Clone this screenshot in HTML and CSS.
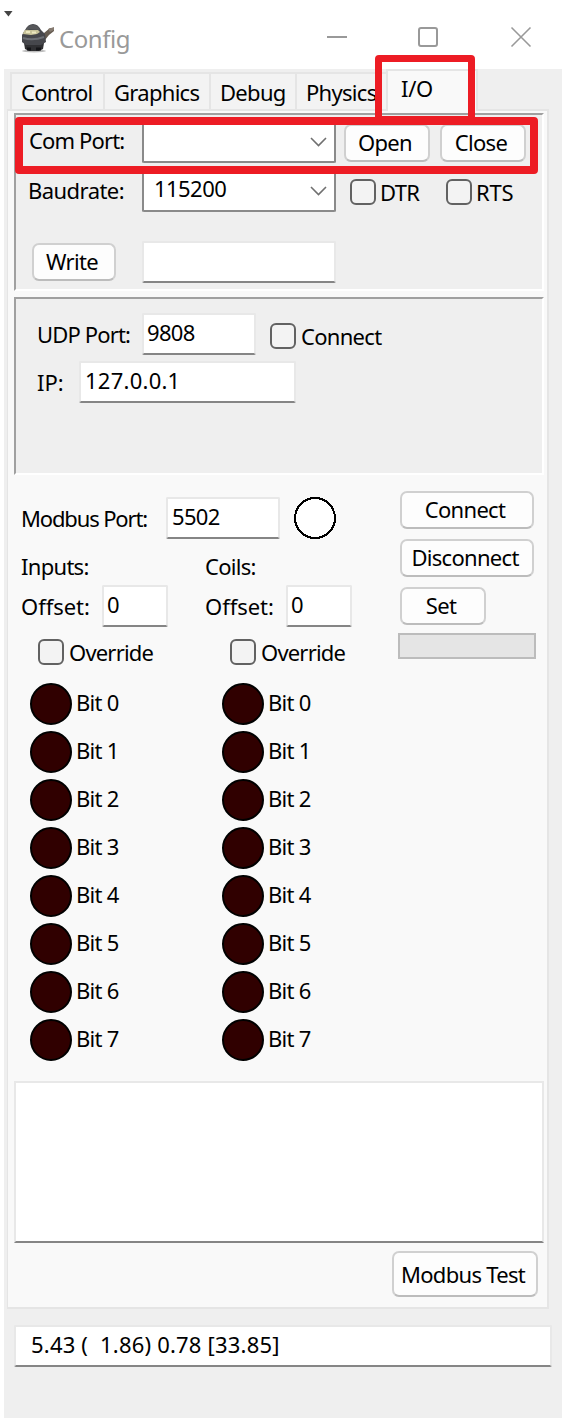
FILE: index.html
```html
<!DOCTYPE html>
<html lang="en">
<head>
<meta charset="utf-8">
<title>Config</title>
<link rel="stylesheet" href="styles.css">
</head>
<body>
<div class="window">
  <header class="titlebar">
    <svg class="menu-arrow" width="9" height="6" viewBox="0 0 9 6"><path d="M0 0h8.500L4.500 5.500z" fill="#444"/></svg>
    <svg class="app-icon" width="34" height="32" viewBox="0 0 34 32">
      <ellipse cx="12" cy="28" rx="12" ry="1.500" fill="#bdbdbd"/>
      <path d="M18 11l4-1 6-5 4 1v2l-5 4-4 5z" fill="#655b50"/>
      <path d="M26 6l6-2v3l-4 2z" fill="#857a70"/>
      <path d="M2 20l1 6 4 2h10l4-2 1-6z" fill="#303033"/>
      <path d="M0 12l3-5Q6 1 11 1t8 6l4 4 1 8-5 3H4l-4-3z" fill="#46474c"/>
      <path d="M4 6q2-4 7-4t7 5z" fill="#56575a"/>
      <path d="M2 8q2-2 5-1h9l2 2-3 2-6 1-8-1z" fill="#c8c39a"/>
      <path d="M4 9h4M10 9.500h4" stroke="#ece8c0" stroke-width="2"/>
      <path d="M1 15q10 3 21-1" stroke="#6d7076" stroke-width="2" fill="none"/>
      <path d="M5 26h4M14 26h5" stroke="#151518" stroke-width="3"/>
    </svg>
    <span class="title">Config</span>
    <svg class="controls" width="206" height="24" viewBox="0 0 206 24" fill="none" stroke="#999" stroke-width="2">
      <path d="M0 13h20"/><rect x="92" y="4" width="18" height="18" rx="2"/><path d="M184.500 3.500l19 19M203.500 3.500l-19 19" stroke-width="1.600"/>
    </svg>
  </header>

  <nav class="tabs">
    <span class="tab t-control">Control</span><span class="tab t-graphics">Graphics</span><span class="tab t-debug">Debug</span><span class="tab t-physics">Physics</span><span class="tab active">I/O</span>
  </nav>

  <main class="page">
    <section class="panel serial">
      <div class="row com">
        <span class="label com-label">Com Port:</span>
        <span class="select"><svg width="17" height="10" viewBox="0 0 17 10"><path d="M1 1l7.500 7.500L16 1" fill="none" stroke="#707070" stroke-width="1.600"/></svg></span>
        <button class="btn open">Open</button>
        <button class="btn close">Close</button>
      </div>
      <div class="row baud">
        <span class="label baud-label">Baudrate:</span>
        <span class="select"><span class="value">115200</span><svg width="17" height="10" viewBox="0 0 17 10"><path d="M1 1l7.500 7.500L16 1" fill="none" stroke="#707070" stroke-width="1.600"/></svg></span>
        <i class="box dtr"></i><span class="label dtr-label">DTR</span>
        <i class="box rts"></i><span class="label rts-label">RTS</span>
      </div>
      <div class="row write-row">
        <button class="btn write">Write</button>
        <span class="field write-field"></span>
      </div>
    </section>

    <section class="panel network">
      <div class="row udp">
        <span class="label udp-label">UDP Port:</span>
        <span class="field udp-field">9808</span>
        <i class="box"></i><span class="label connect-label">Connect</span>
      </div>
      <div class="row ip">
        <span class="label ip-label">IP:</span>
        <span class="field ip-field">127.0.0.1</span>
      </div>
    </section>

    <section class="modbus">
      <div class="registers">
        <div class="row port">
          <span class="label port-label">Modbus Port:</span>
          <span class="field port-field">5502</span>
          <svg class="led" width="42" height="42" viewBox="0 0 42 42"><circle cx="21" cy="21" r="20" fill="#fff" stroke="#000" stroke-width="2" shape-rendering="crispEdges"/></svg>
        </div>
        <div class="columns">
          <div class="column">
            <div class="label heading inputs">Inputs:</div>
            <div class="row offset"><span class="label offset-label">Offset:</span><span class="field">0</span></div>
            <div class="row override"><i class="box"></i><span class="label override-label">Override</span></div>
            <ul class="bits">
              <li><i class="lamp"></i><span>Bit 0</span></li><li><i class="lamp"></i><span>Bit 1</span></li><li><i class="lamp"></i><span>Bit 2</span></li><li><i class="lamp"></i><span>Bit 3</span></li>
              <li><i class="lamp"></i><span>Bit 4</span></li><li><i class="lamp"></i><span>Bit 5</span></li><li><i class="lamp"></i><span>Bit 6</span></li><li><i class="lamp"></i><span>Bit 7</span></li>
            </ul>
          </div>
          <div class="column coils">
            <div class="label heading">Coils:</div>
            <div class="row offset"><span class="label offset-label">Offset:</span><span class="field">0</span></div>
            <div class="row override"><i class="box"></i><span class="label override-label">Override</span></div>
            <ul class="bits">
              <li><i class="lamp"></i><span>Bit 0</span></li><li><i class="lamp"></i><span>Bit 1</span></li><li><i class="lamp"></i><span>Bit 2</span></li><li><i class="lamp"></i><span>Bit 3</span></li>
              <li><i class="lamp"></i><span>Bit 4</span></li><li><i class="lamp"></i><span>Bit 5</span></li><li><i class="lamp"></i><span>Bit 6</span></li><li><i class="lamp"></i><span>Bit 7</span></li>
            </ul>
          </div>
        </div>
      </div>
      <div class="actions">
        <button class="btn connect">Connect</button>
        <button class="btn disconnect">Disconnect</button>
        <button class="btn set">Set</button>
        <div class="progress"></div>
      </div>
    </section>

    <div class="log"></div>
    <button class="btn test">Modbus Test</button>
  </main>

  <footer class="field status">5.43 (&nbsp; 1.86) 0.78 [33.85]</footer>
  <div class="mark mark-tab"></div>
  <div class="mark mark-row"></div>
</div>
</body>
</html>
```

FILE: styles.css
```css
* { box-sizing: border-box; }
body { margin: 0; background: #fff; font: 22px/30px "Noto Sans", sans-serif; color: #000; letter-spacing: -0.7px; }
svg { display: block; flex: none; }
.window { position: relative; width: 562px; height: 1418px; padding-left: 4px; background: linear-gradient(#fff 69px, #efefef 69px); overflow: hidden; }
.window::before { content: ""; position: absolute; left: 0; top: 69px; width: 4px; height: 1349px; background: #fff; }
.titlebar { display: flex; height: 69px; }
.menu-arrow { margin-top: 11px; }
.app-icon { margin: 23px 0 0 9px; }
.title { margin: 24px 0 0 3px; width: 90px; font-size: 24px; color: #999; letter-spacing: -0.45px; }
.controls { margin: 24px 0 0 178px; }

.tabs { display: flex; align-items: flex-end; height: 40px; padding-left: 6px; }
.tab { height: 37px; padding: 3px 0 0 9px; background: #f3f3f3; border: 2px solid #e5e5e5; border-bottom: 0; border-right-width: 0; white-space: nowrap; }
.t-control { width: 93px; }
.t-graphics { width: 106px; }
.t-debug { width: 86px; }
.t-physics { width: 91px; }
.active { height: 42px; margin-bottom: -2px; width: 92px; padding: 2px 0 0 13px; background: #f9f9f9; border-right-width: 2px; position: relative; letter-spacing: -0.3px; }

.page { width: 542px; height: 1200px; margin-left: 3px; border: 2px solid #e5e5e5; border-left-width: 1px; background: #f9f9f9; padding: 2px 0 0 6px; }
.panel { width: 530px; height: 178px; background: #efefef; border: 2px solid #fff; border-top-color: #a0a0a0; border-left-color: #a0a0a0; }
.network { margin-top: 6px; padding-top: 14px; }
.row { display: flex; align-items: flex-start; height: 48px; }
.label { white-space: nowrap; flex: none; }
.select { width: 194px; height: 40px; background: #fff; border: 2px solid #8a8a8a; border-top: 0; border-radius: 2px; display: flex; align-items: flex-start; flex: none; }
.select .value { padding: 1px 0 0 10px; letter-spacing: -0.55px; }
.select svg { margin: 14px 7px 0 auto; }
.btn { display: block; height: 38px; padding: 0 4px 2px 0; border: 2px solid #d0d0d0; border-bottom-color: #bcbcbc; border-radius: 7px; background: #fdfdfd; color: #000; font: inherit; letter-spacing: inherit; text-align: center; white-space: nowrap; flex: none; }
.field { display: block; height: 42px; padding: 2px 0 0 3px; background: #fff; border: 2px solid #e8e8e8; border-bottom-color: #858585; border-radius: 2px; white-space: nowrap; flex: none; }
.box { width: 26px; height: 26px; border: 2px solid #626262; border-radius: 6px; background: #f3f3f3; flex: none; }

.com { padding-top: 8px; }
.com-label { width: 113px; margin: 2px 0 0 13px; letter-spacing: -0.85px; }
.baud { padding-top: 9px; }
.baud-label { width: 114px; margin: 3px 0 0 12px; letter-spacing: -0.55px; }
.com .btn { margin: 1px 0 0 8px; width: 86px; }
.com .close { margin-left: 10px; }
.baud .box { margin: 7px 4px 0 14px; }
.dtr-label, .rts-label { margin-top: 5px; width: 47px; }
.rts-label { letter-spacing: -0.2px; }
.baud .rts { margin-left: 19px; }
.write-row { padding: 30px 0 0 16px; height: auto; }
.write { width: 84px; margin-top: 2px; }
.write-field { width: 194px; margin-left: 26px; }

.udp-label { width: 105px; margin: 6px 0 0 21px; letter-spacing: -0.85px; }
.udp-field { width: 114px; }
.udp .box { margin: 10px 5px 0 14px; }
.connect-label { margin-top: 8px; }
.ip-label { width: 42px; margin: 6px 0 0 21px; letter-spacing: 0; }
.ip-field { width: 217px; padding-left: 4px; letter-spacing: 0.25px; }

.modbus { display: flex; height: 606px; padding-top: 16px; }
.registers { width: 386px; padding-left: 7px; }
.port { padding-top: 6px; }
.port-label { width: 145px; margin-top: 6px; letter-spacing: -1.15px; }
.port-field { width: 114px; padding-left: 4px; }
.led { margin-left: 14px; }
.columns { display: flex; padding-top: 12px; }
.column { width: 184px; }
.heading { height: 34px; }
.offset-label { width: 81px; margin-top: 6px; letter-spacing: -0.05px; }
.offset .field { width: 66px; }
.override { padding: 6px 0 0 17px; height: 50px; }
.override-label { margin: -2px 0 0 5px; letter-spacing: -0.8px; }
.coils .override { padding-left: 25px; }
.bits { list-style: none; margin: 0; padding: 0 0 0 9px; }
.coils .bits { padding-left: 17px; }
.bits li { display: flex; height: 48px; gap: 5px; }
.bits span { margin: 4px 0 0 -1px; white-space: nowrap; }
.lamp { width: 42px; height: 42px; border: 2px solid #000; border-radius: 50%; background: #300000; flex: none; }

.connect, .disconnect { width: 134px; margin-bottom: 10px; }
.set { width: 86px; }
.progress { width: 138px; height: 26px; margin: 8px 0 0 -2px; background: #e5e5e5; border: 2px solid #bcbcbc; }
.log { width: 530px; height: 162px; background: #fff; border: 2px solid #e8e8e8; border-bottom-color: #858585; }
.test { width: 146px; height: 46px; margin: 8px 0 0 378px; padding-bottom: 0; }
.status { width: 538px; margin: 16px 0 0 10px; padding-left: 15px; letter-spacing: 0.2px; }

.mark { position: absolute; border: 8px solid #ed1c24; border-radius: 4px; }
.mark-tab { left: 375px; top: 55px; width: 100px; height: 68px; border-width: 7px; }
.mark-row { left: 15px; top: 117px; width: 523px; height: 57px; }
```
